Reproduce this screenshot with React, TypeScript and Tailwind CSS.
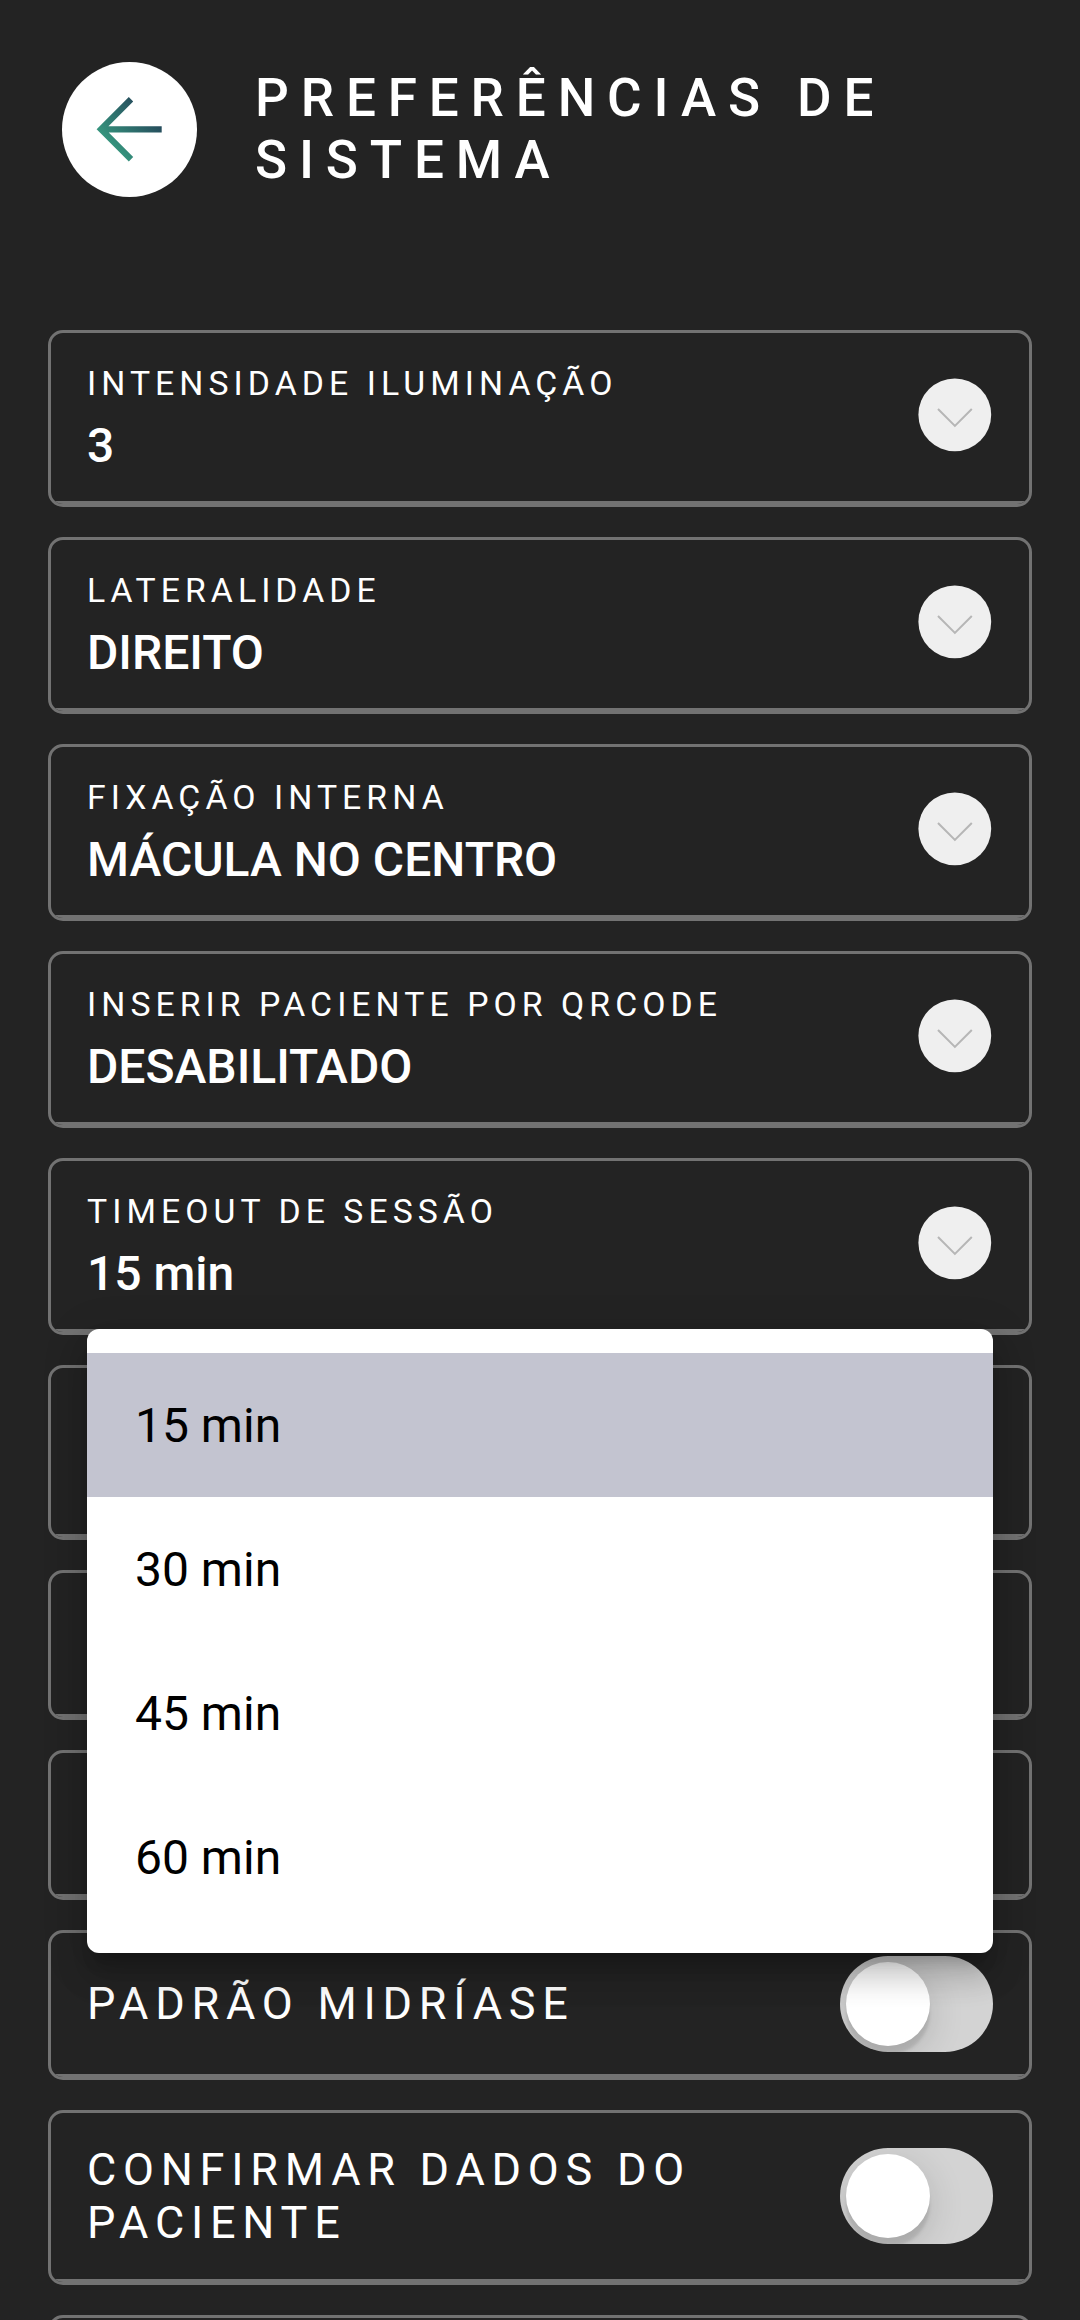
import React, { useState } from 'react';
import clsx from 'clsx';

interface SelectCardProps {
  label: string;
  value: string;
  options?: string[];
  isOpen?: boolean;
  onChange?: (value: string) => void;
}

interface SwitchCardProps {
  label: string;
  lines?: 1 | 2;
}

function Card({ className, children }: { className?: string; children?: React.ReactNode }) {
  return (
    <div
      className={clsx(
        'flex flex-col overflow-hidden border-[3px] border-[#727272] rounded-[15px]',
        className
      )}
    >
      <div className="flex flex-row justify-between flex-1 px-9">{children}</div>
      <div className="h-[3px] shrink-0 bg-[#727272]" />
    </div>
  );
}

function BackButton() {
  return (
    <button className="w-[135px] h-[135px] shrink-0 rounded-full bg-white">
      <svg width="135" height="135" viewBox="0 0 135 135" fill="none">
        <defs>
          <linearGradient id="arrow" x1="46" y1="80" x2="84" y2="46" gradientUnits="userSpaceOnUse">
            <stop stopColor="#36957e" />
            <stop offset="1" stopColor="#254a5b" />
          </linearGradient>
        </defs>
        <path
          d="M69 37.3L39 67.3L69 97.3M40 67.3H99.7"
          stroke="url(#arrow)"
          strokeWidth="6.2"
        />
      </svg>
    </button>
  );
}

function ChevronIcon() {
  return (
    <svg className="mt-[45px] mr-px" width="74" height="74" viewBox="0 0 74 74" fill="none">
      <circle cx="36.8" cy="36.8" r="36.4" fill="#efefef" />
      <path d="M20 31L36.9 47.9L53.8 31" stroke="#b6b6b6" strokeWidth="2" />
    </svg>
  );
}

function SelectCard({ label, value, options = [], isOpen, onChange }: SelectCardProps) {
  return (
    <div className="relative">
      <Card className="h-[177px]">
        <div className="flex flex-col pt-[31px] text-white">
          <p className="text-[33.75px] leading-[40px] tracking-[0.15em]">{label}</p>
          <p className="mt-3.5 text-[48px] leading-[56px] font-medium">{value}</p>
        </div>
        <ChevronIcon />
      </Card>
      {isOpen && (
        <ul className="absolute z-10 top-[171px] left-[39px] w-[906px] py-6 bg-white rounded-xl shadow-[0_15px_15px_-9px_rgba(0,0,0,0.2),0_24px_30px_3px_rgba(0,0,0,0.14),0_9px_42px_6px_rgba(0,0,0,0.12)]">
          {options.map((option) => (
            <li
              key={option}
              className={clsx('h-36 px-12 text-[48px] leading-[146px] text-black cursor-pointer', {
                'bg-[#c3c4d0]': option === value,
              })}
              onClick={() => onChange?.(option)}
            >
              {option}
            </li>
          ))}
        </ul>
      )}
    </div>
  );
}

function SwitchCard({ label, lines = 1 }: SwitchCardProps) {
  const [checked, setChecked] = useState<boolean>(false);

  return (
    <Card className={lines === 2 ? 'h-[175px]' : 'h-[150px]'}>
      <p className="self-center w-[640px] text-[45px] leading-[53px] tracking-[0.15em] text-white">
        {label}
      </p>
      <button
        className="self-center w-[153px] h-24 p-1.5 rounded-full bg-[#d3d3d3] overflow-hidden"
        onClick={() => setChecked(!checked)}
      >
        <div
          className={clsx(
            'w-[84px] h-[84px] rounded-full bg-white shadow-[0_9px_36px_rgba(0,0,0,0.16),0_9px_3px_rgba(0,0,0,0.1)]',
            { 'ml-auto': checked }
          )}
        />
      </button>
    </Card>
  );
}

export default function App() {
  const [timeout, setTimeoutValue] = useState<string>('15 min');

  return (
    <div className="w-[1080px] h-[2320px] overflow-hidden bg-[#232323] font-['Roboto',sans-serif]">
      <div className="flex flex-row items-start h-[330px] pt-[62px] pl-[62px]">
        <BackButton />
        <h1 className="w-[720px] mt-[5px] ml-[58px] text-[53px] leading-[62px] font-medium tracking-[11.87px] text-white">
          PREFERÊNCIAS DE SISTEMA
        </h1>
      </div>
      <div className="flex flex-col px-12 space-y-[30px]">
        <SelectCard label="INTENSIDADE ILUMINAÇÃO" value="3" />
        <SelectCard label="LATERALIDADE" value="DIREITO" />
        <SelectCard label="FIXAÇÃO INTERNA" value="MÁCULA NO CENTRO" />
        <SelectCard label="INSERIR PACIENTE POR QRCODE" value="DESABILITADO" />
        <SelectCard
          label="TIMEOUT DE SESSÃO"
          value={timeout}
          options={['15 min', '30 min', '45 min', '60 min']}
          onChange={setTimeoutValue}
          isOpen
        />
        <Card className="h-[175px]" />
        <Card className="h-[150px]" />
        <Card className="h-[150px]" />
        <SwitchCard label="PADRÃO MIDRÍASE" />
        <SwitchCard label="CONFIRMAR DADOS DO PACIENTE" lines={2} />
        <Card className="h-[150px]" />
      </div>
    </div>
  );
}
